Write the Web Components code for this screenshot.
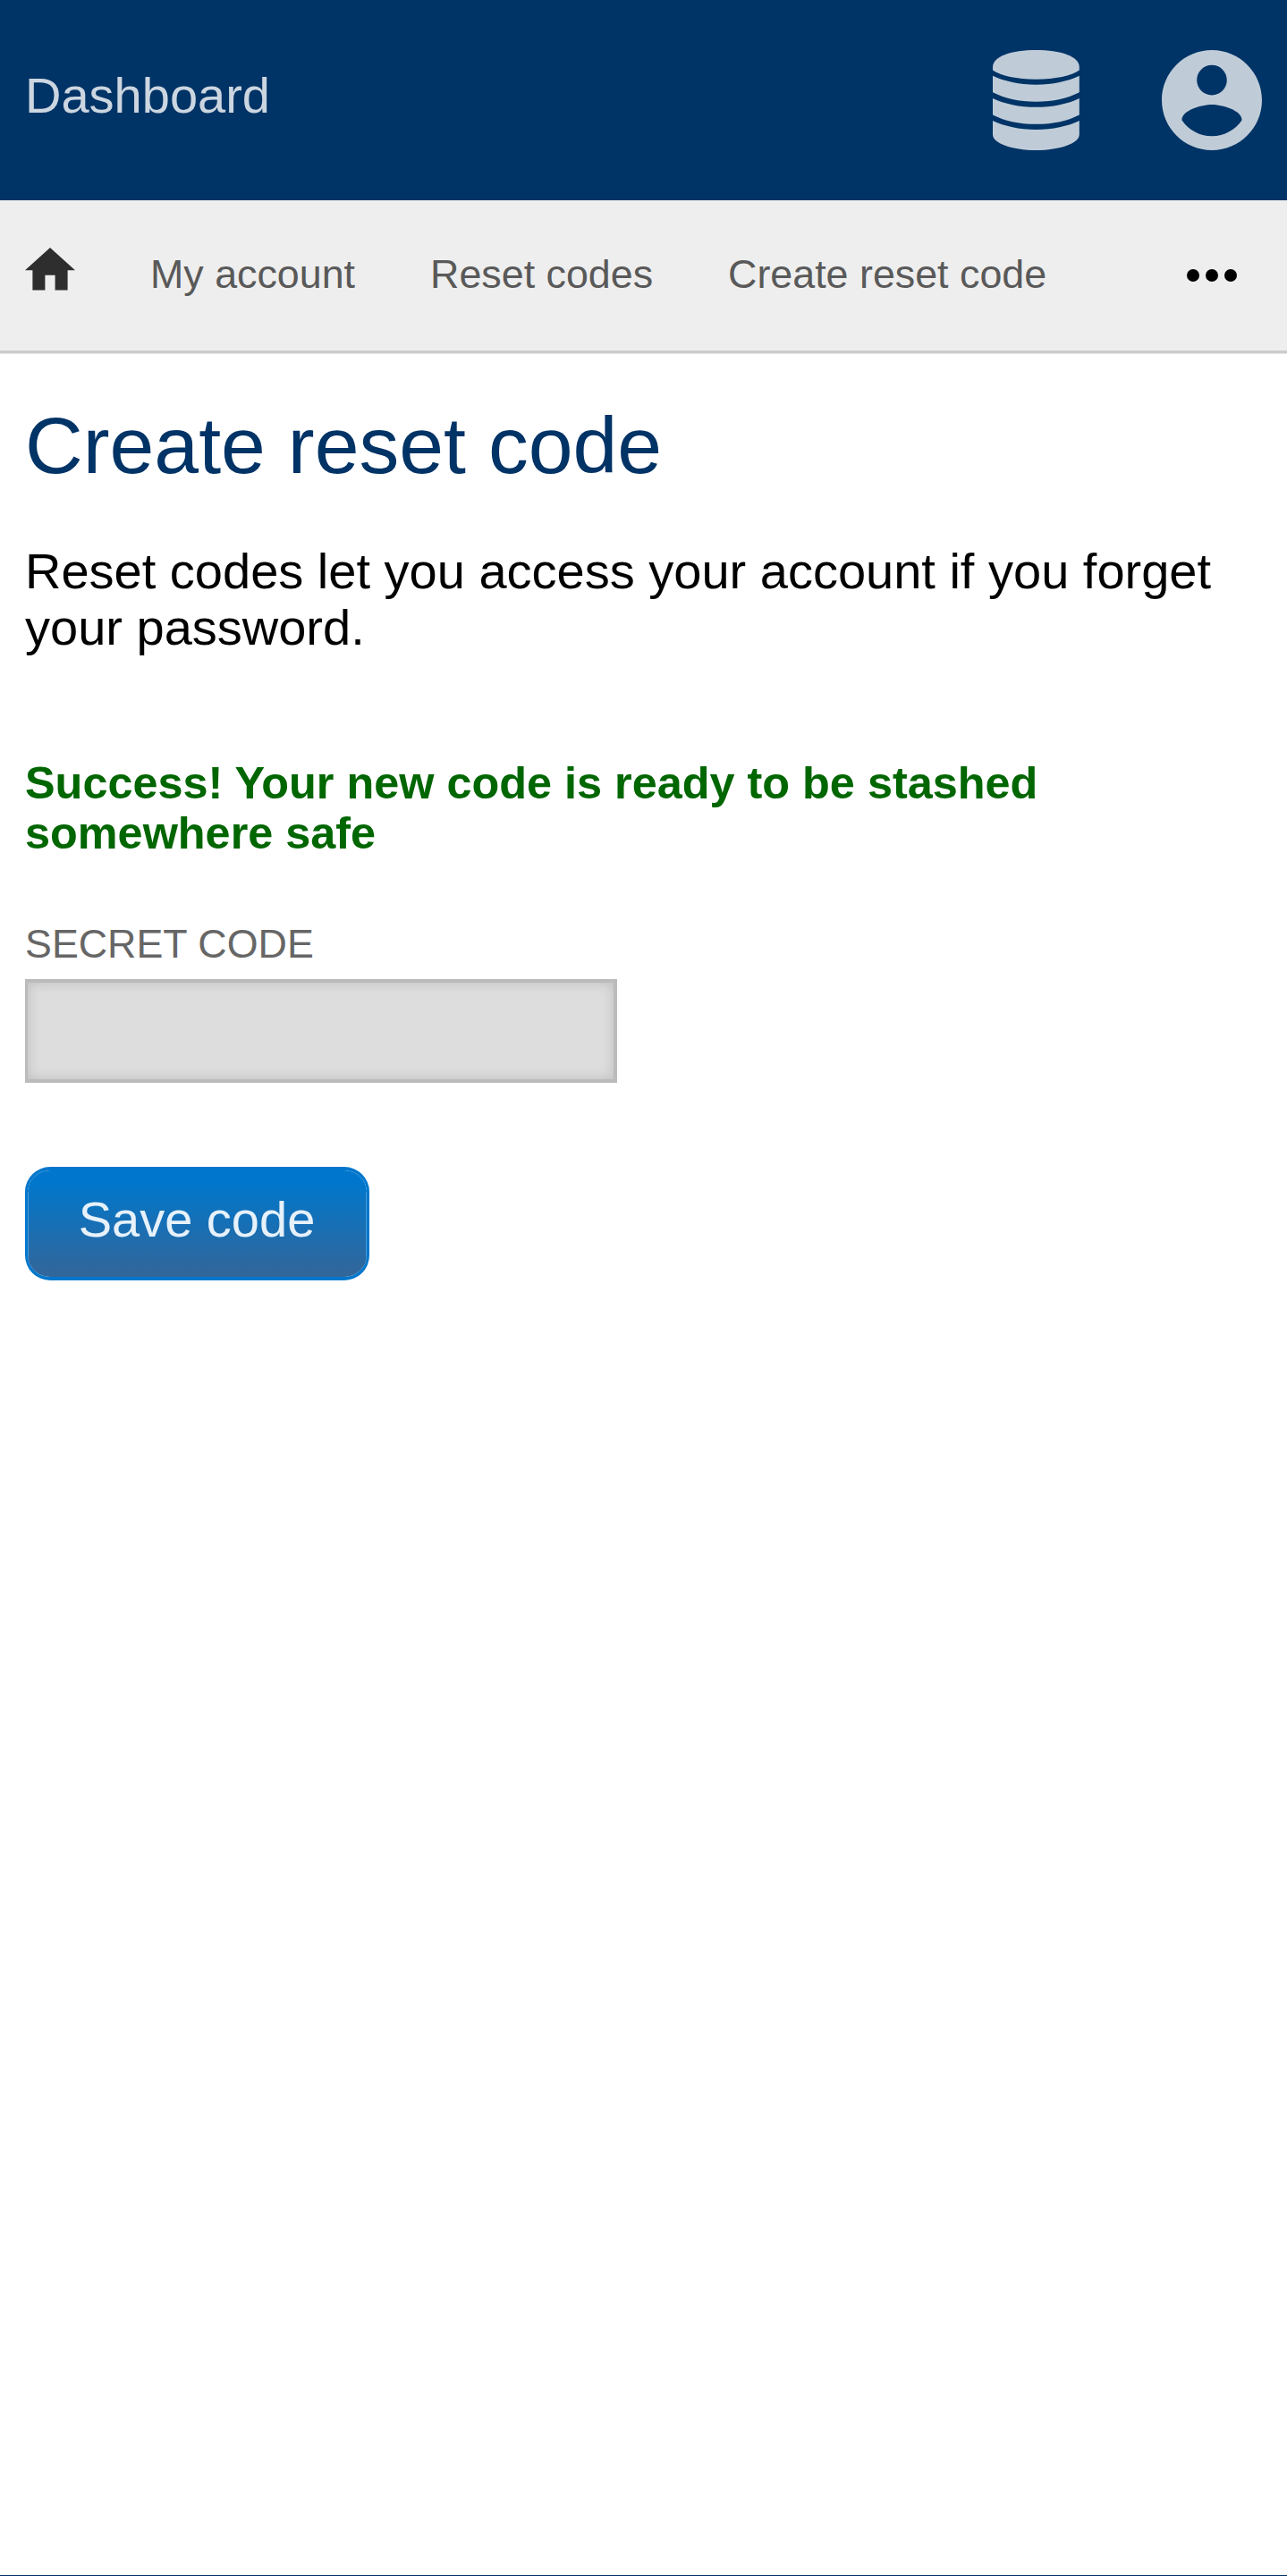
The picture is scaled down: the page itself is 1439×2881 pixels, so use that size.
<!DOCTYPE html>
<html lang="en">
<head>
<meta charset="utf-8">
<title>Create reset code</title>
<style>
html,body{margin:0;padding:0}
body{font-family:"Liberation Sans",Arial,sans-serif;font-size:56px;line-height:63px;color:#000;background:#fff}
</style>
</head>
<body>
<app-page>
  <app-header slot="header">Dashboard</app-header>
  <crumb-bar slot="nav">
    <crumb-link>My account</crumb-link>
    <crumb-link>Reset codes</crumb-link>
    <crumb-link>Create reset code</crumb-link>
  </crumb-bar>
  <page-title>Create reset code</page-title>
  <page-intro>Reset codes let you access your account if you forget your password.</page-intro>
  <status-message>Success! Your new code is ready to be stashed somewhere safe</status-message>
  <code-field>SECRET CODE</code-field>
  <action-button>Save code</action-button>
</app-page>
<script>
const define = (name, html) => customElements.define(name, class extends HTMLElement {
  constructor() {
    super();
    this.attachShadow({mode: 'open'}).innerHTML = html;
  }
});

define('app-page', `
<style>
:host{display:flex;flex-direction:column;box-sizing:border-box;height:2881px;border-bottom:1px solid #036;overflow:hidden}
main{display:flex;flex-direction:column;align-items:flex-start;padding:0 28px}
</style>
<slot name="header"></slot><slot name="nav"></slot><main><slot></slot></main>`);

define('app-header', `
<style>
:host{display:flex;align-items:center;justify-content:space-between;box-sizing:border-box;height:224px;padding:0 28.5px 0 28px;background:#036;color:#ccd6e0}
.title{padding-bottom:11px}
.tools{display:flex;align-items:center;gap:92px}
svg{display:block;height:112px;fill:#bfccd8}
</style>
<span class="title"><slot></slot></span>
<div class="tools">
<svg width="97" viewBox="0 0 97 112"><path d="M0 19C0 7 21 0 48.4 0S96.8 7 96.8 19v3.5C88 28.5 70 32.8 48.4 32.8S9 28.5 0 22.5Z"/><path d="M0 28.8C13 35 30 38.7 48.4 38.7S84 35 96.8 28.8V47.3C84 54 68 57.7 48.4 57.7S13 54 0 47.3Z"/><path transform="translate(0 25.1)" d="M0 28.8C13 35 30 38.7 48.4 38.7S84 35 96.8 28.8V47.3C84 54 68 57.7 48.4 57.7S13 54 0 47.3Z"/><path d="M0 79C13 85.2 30 88.9 48.4 88.9S84 85.2 96.8 79V94.5C96.8 104 76 112 48.4 112S0 104 0 94.5Z"/></svg>
<svg width="112" viewBox="2 2 20 20"><path d="M12 2C6.48 2 2 6.48 2 12s4.48 10 10 10 10-4.48 10-10S17.52 2 12 2zm0 3c1.66 0 3 1.34 3 3s-1.34 3-3 3-3-1.34-3-3 1.34-3 3-3zm0 14.2c-2.5 0-4.71-1.28-6-3.22.03-1.99 4-3.08 6-3.08 1.99 0 5.97 1.09 6 3.08-1.29 1.94-3.5 3.22-6 3.22z"/></svg>
</div>`);

define('crumb-bar', `
<style>
:host{display:flex;align-items:center;box-sizing:border-box;height:172px;padding:0 56.5px 4px 28px;background:linear-gradient(#eee 168px,#ccc 168px,#ccc 171px,#e6e6e6 171px)}
nav{display:flex;align-items:center;gap:84px;flex:1}
svg{display:block}
.home{fill:#2e2e2e;margin-bottom:14px}
</style>
<nav><svg class="home" width="56" height="47.6" viewBox="2 3 20 17"><path d="M10 20v-6h4v6h5v-8h3L12 3 2 12h3v8z"/></svg><slot></slot></nav>
<svg width="56" height="14" viewBox="4 10 16 4"><circle cx="6" cy="12" r="2"/><circle cx="12" cy="12" r="2"/><circle cx="18" cy="12" r="2"/></svg>`);

define('crumb-link', `
<style>:host{display:block;margin-bottom:4px;font-size:44.8px;line-height:52px;color:#595959;white-space:nowrap}</style><slot></slot>`);

define('page-title', `
<style>:host{display:block;margin-top:51px}h1{margin:0;font-size:89.6px;line-height:102px;font-weight:400;color:#036}</style><h1><slot></slot></h1>`);

define('page-intro', `
<style>:host{display:block;margin-top:58px}p{margin:0}</style><p><slot></slot></p>`);

define('status-message', `
<style>:host{display:block;margin-top:115px;font-size:50.4px;line-height:56px;font-weight:700;color:#060}</style><slot></slot>`);

define('code-field', `
<style>
:host{display:block;margin-top:69px}
label{display:block;font-size:44.8px;line-height:52px;color:#666}
input{display:block;box-sizing:border-box;width:662px;height:116px;margin:14px 0 0;padding:0 28px;border:solid #bbb;border-width:4px 4px 4px 3px;border-radius:0;background:#ddd;box-shadow:inset 0 0 14px rgba(0,0,0,.15);font:inherit;outline:0}
</style><label for="code"><slot></slot></label><input id="code" readonly>`);

define('action-button', `
<style>
:host{display:block;margin-top:94px}
button{display:block;box-sizing:border-box;width:385px;height:127px;padding:0 1px 10px 0;border:solid #07c;border-width:4px 3px;border-radius:28px;background:linear-gradient(#4d9bd6,#4d9bd6) 0 24px/1px 76px no-repeat padding-box,linear-gradient(#4d9bd6,#4d9bd6) 100% 24px/1px 76px no-repeat padding-box,linear-gradient(#07c 10%,#369) padding-box;color:#e6f1fa;font:inherit;line-height:63px}
</style><button><slot></slot></button>`);
</script>
</body>
</html>
